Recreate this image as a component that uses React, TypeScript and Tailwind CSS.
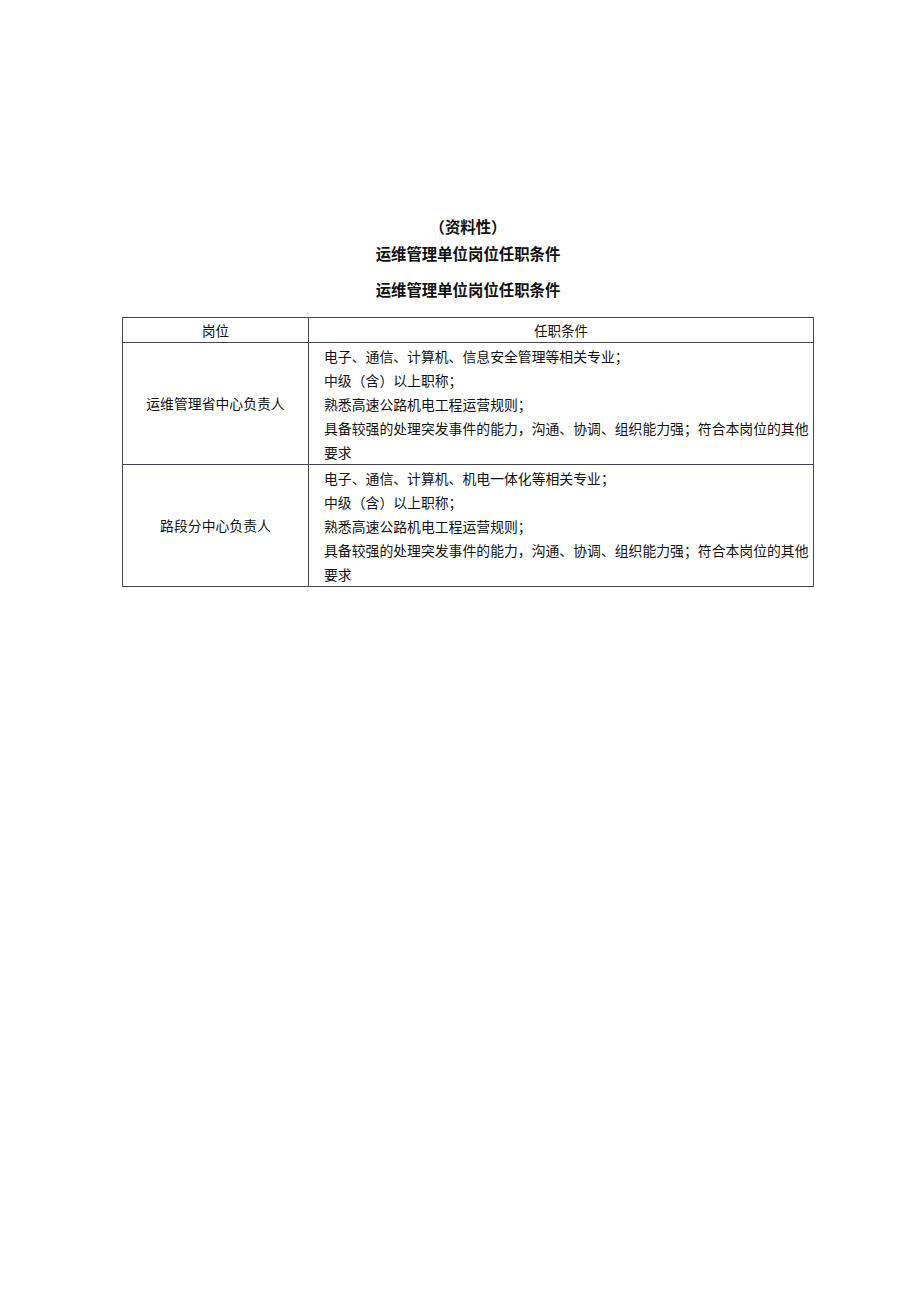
import React from 'react';

const rows = [
  {
    post: '运维管理省中心负责人',
    lines: [
      '电子、通信、计算机、信息安全管理等相关专业；',
      '中级（含）以上职称；',
      '熟悉高速公路机电工程运营规则；',
      '具备较强的处理突发事件的能力，沟通、协调、组织能力强；符合本岗位的其他',
      '要求',
    ],
  },
  {
    post: '路段分中心负责人',
    lines: [
      '电子、通信、计算机、机电一体化等相关专业；',
      '中级（含）以上职称；',
      '熟悉高速公路机电工程运营规则；',
      '具备较强的处理突发事件的能力，沟通、协调、组织能力强；符合本岗位的其他',
      '要求',
    ],
  },
];

const font = { fontFamily: '"Noto Sans CJK SC", "Noto Sans", sans-serif' };

export default function App() {
  return (
    <div className="min-h-[1301px] w-[920px] bg-white text-[#111]" style={font}>
      <div className="pl-[122px] pt-[213px]">
        <div className="w-[692px]">
          {/* Title */}
          <div className="flex flex-col items-center text-[15.4px] font-bold">
            <div className="h-[27px] leading-[27px]">（资料性）</div>
            <div className="h-[27px] leading-[27px]">运维管理单位岗位任职条件</div>
            <div className="mt-[9px] h-[27px] leading-[27px]">运维管理单位岗位任职条件</div>
          </div>

          {/* Table */}
          <table className="mt-[14px] w-[692px] border-collapse text-[13.85px] font-normal">
            <thead>
              <tr className="h-[25px]">
                <th className="w-[186px] border border-[#4a4058] p-0 text-center text-[13.5px] font-normal leading-[24px]">
                  岗位
                </th>
                <th className="border border-[#4a4058] p-0 text-center text-[13.5px] font-normal leading-[24px]">
                  任职条件
                </th>
              </tr>
            </thead>
            <tbody>
              {rows.map((r) => (
                <tr key={r.post} className="h-[122px]">
                  <td className="border border-[#4a4058] p-0 text-center align-middle">
                    {r.post}
                  </td>
                  <td className="border border-[#4a4058] py-0 pl-[15px] pr-0 align-middle">
                    {r.lines.map((l, i) => (
                      <div key={i} className="whitespace-nowrap leading-[24px]">
                        {l}
                      </div>
                    ))}
                  </td>
                </tr>
              ))}
            </tbody>
          </table>
        </div>
      </div>
    </div>
  );
}
